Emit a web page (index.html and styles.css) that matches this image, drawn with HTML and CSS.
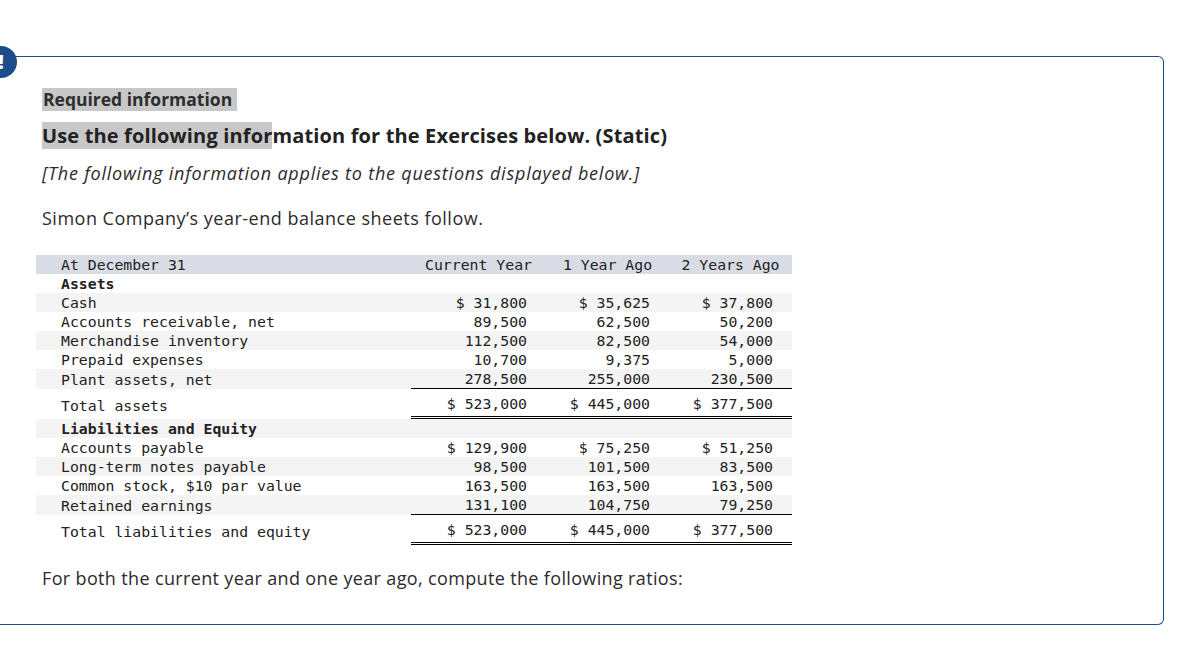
FILE: index.html
```html
<!DOCTYPE html>
<html>
<head>
<meta charset="utf-8">
<link rel="stylesheet" href="styles.css">
</head>
<body>
<div class="card">
  <span class="badge">!</span>
  <div class="content">
    <div class="req-line"><span class="req">Required information</span></div>
    <div class="use"><span class="hl">Use the following infor</span>mation for the Exercises below. (Static)</div>
    <div class="intro">[The following information applies to the questions displayed below.]</div>
    <div class="simon">Simon Company’s year-end balance sheets follow.</div>
    <table class="bs">
      <tr class="head">
        <td class="lbl">At December 31</td>
        <td class="c1 hc">Current Year</td>
        <td class="c2 hc">1 Year Ago</td>
        <td class="c3 hc">2 Years Ago</td>
      </tr>
      <tr>
        <td class="lbl b">Assets</td><td></td><td></td><td></td>
      </tr>
      <tr class="alt">
        <td class="lbl">Cash</td><td class="num">$ 31,800</td><td class="num">$ 35,625</td><td class="num">$ 37,800</td>
      </tr>
      <tr>
        <td class="lbl">Accounts receivable, net</td><td class="num">89,500</td><td class="num">62,500</td><td class="num">50,200</td>
      </tr>
      <tr class="alt">
        <td class="lbl">Merchandise inventory</td><td class="num">112,500</td><td class="num">82,500</td><td class="num">54,000</td>
      </tr>
      <tr>
        <td class="lbl">Prepaid expenses</td><td class="num">10,700</td><td class="num">9,375</td><td class="num">5,000</td>
      </tr>
      <tr class="alt under">
        <td class="lbl">Plant assets, net</td><td class="num">278,500</td><td class="num">255,000</td><td class="num">230,500</td>
      </tr>
      <tr class="total">
        <td class="lbl">Total assets</td><td class="num">$ 523,000</td><td class="num">$ 445,000</td><td class="num">$ 377,500</td>
      </tr>
      <tr class="alt">
        <td class="lbl b">Liabilities and Equity</td><td></td><td></td><td></td>
      </tr>
      <tr>
        <td class="lbl">Accounts payable</td><td class="num">$ 129,900</td><td class="num">$ 75,250</td><td class="num">$ 51,250</td>
      </tr>
      <tr class="alt">
        <td class="lbl">Long-term notes payable</td><td class="num">98,500</td><td class="num">101,500</td><td class="num">83,500</td>
      </tr>
      <tr>
        <td class="lbl">Common stock, $10 par value</td><td class="num">163,500</td><td class="num">163,500</td><td class="num">163,500</td>
      </tr>
      <tr class="alt under">
        <td class="lbl">Retained earnings</td><td class="num">131,100</td><td class="num">104,750</td><td class="num">79,250</td>
      </tr>
      <tr class="total">
        <td class="lbl">Total liabilities and equity</td><td class="num">$ 523,000</td><td class="num">$ 445,000</td><td class="num">$ 377,500</td>
      </tr>
    </table>
    <div class="ratios">For both the current year and one year ago, compute the following ratios:</div>
  </div>
</div>
</body>
</html>
```
FILE: styles.css
```css
html, body {
  margin: 0;
  padding: 0;
  background: #ffffff;
}
body {
  font-family: "Open Sans", Lato, sans-serif;
  color: #2b2b2b;
}
.card {
  position: relative;
  margin-top: 56px;
  width: 1163px;
  height: 567px;
  border-top: 1px solid #1b4d8a;
  border-right: 1px solid #1b4d8a;
  border-bottom: 1px solid #1b4d8a;
  border-radius: 0 6px 6px 0;
  box-sizing: content-box;
}
.badge {
  position: absolute;
  left: -15px;
  top: -11px;
  width: 32px;
  height: 32px;
  border-radius: 50%;
  background: #1b4d8a;
  color: #ffffff;
  font-weight: 800;
  font-size: 20px;
  line-height: 32px;
  text-align: center;
}
.content {
  padding: 31px 0 0 42px;
}
.req-line {
  height: 23px;
}
.req {
  display: inline-block;
  background: #c8c8c8;
  font-weight: 700;
  font-size: 17.5px;
  line-height: 23px;
  padding: 0 5px 0 1px;
  color: #2d2d2d;
}
.use {
  margin-top: 11px;
  font-weight: 700;
  font-size: 20px;
  letter-spacing: 0.15px;
  line-height: 27px;
  color: #222222;
}
.hl {
  background: #c8c8c8;
}
.intro {
  margin-top: 12px;
  font-style: italic;
  font-size: 18px;
  letter-spacing: 0.78px;
  line-height: 24px;
  color: #2b2b2b;
}
.simon {
  margin-top: 21px;
  font-size: 18px;
  letter-spacing: 0.5px;
  line-height: 24px;
  color: #2b2b2b;
}
.bs {
  margin-top: 25px;
  margin-left: -6px;
  border-collapse: separate;
  border-spacing: 0;
  font-family: "DejaVu Sans Mono", "Liberation Mono", monospace;
  font-size: 14.8px;
  color: #222222;
}
.bs td {
  padding: 0;
  height: 19px;
  line-height: 19px;
  white-space: pre;
}
.bs .lbl {
  width: 350px;
  padding-left: 25px;
}
.bs td:nth-child(2) {
  width: 135px;
}
.bs td:nth-child(3),
.bs td:nth-child(4) {
  width: 123px;
}
.bs .b {
  font-weight: 700;
}
.head td {
  background: #d9dce5;
}
.hc {
  text-align: center;
}
.num {
  text-align: right;
  padding-right: 19px !important;
  box-sizing: border-box;
}
.alt td {
  background: #f4f4f4;
}
.under td.num {
  border-bottom: 1px solid #000000;
}
.total td {
  height: 27px;
  padding-top: 5px;
  padding-bottom: 3px;
  box-sizing: border-box;
  line-height: 19px;
}
.total td.num {
  border-bottom: 3px double #000000;
}
.ratios {
  margin-top: 21px;
  font-size: 18px;
  letter-spacing: 0.35px;
  line-height: 24px;
  color: #2b2b2b;
}
```
